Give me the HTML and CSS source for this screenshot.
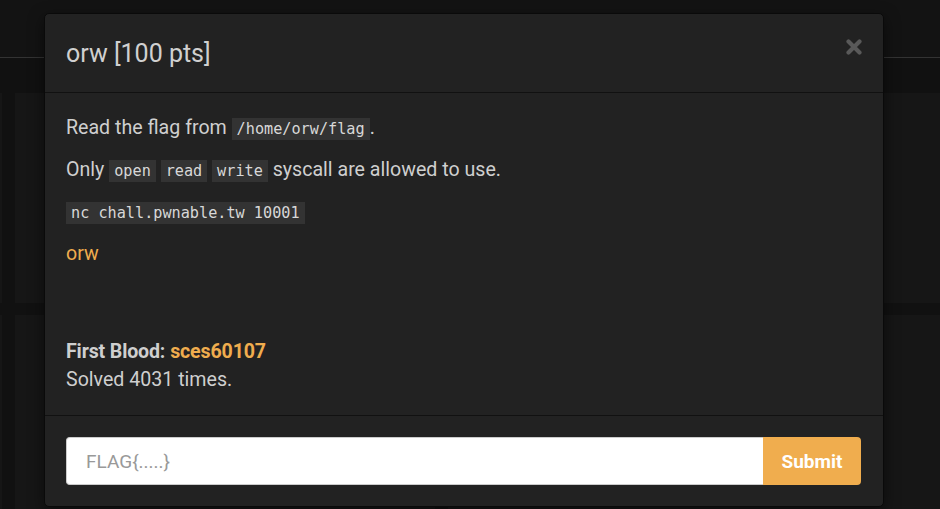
FILE: index.html
```html
<!DOCTYPE html>
<html>
<head>
<meta charset="utf-8">
<link rel="stylesheet" href="styles.css">
</head>
<body>
<div class="page">
  <div class="navbar"></div>
  <div class="cards">
    <div class="card-row">
      <div class="card c1"></div>
      <div class="card c2"></div>
      <div class="card c3"></div>
    </div>
    <div class="card-row">
      <div class="card c1"></div>
      <div class="card c2"></div>
      <div class="card c3"></div>
    </div>
  </div>
</div>
<div class="modal">
  <div class="modal-header">
    <h4 class="modal-title">orw [100 pts]</h4>
    <button class="close" aria-label="Close">
      <svg width="16" height="16" viewBox="0 0 16 16"><path d="M2.5 2.5 L13.5 13.5 M13.5 2.5 L2.5 13.5" stroke="#595959" stroke-width="4.2" stroke-linecap="round"/></svg>
    </button>
  </div>
  <div class="modal-body">
    <p>Read the flag from <code>/home/orw/flag</code>.</p>
    <p>Only <code>open</code> <code>read</code> <code>write</code> syscall are allowed to use.</p>
    <p><code>nc chall.pwnable.tw 10001</code></p>
    <p class="link">orw</p>
    <div class="stats">
      <div><b>First Blood:</b> <b class="user">sces60107</b></div>
      <div>Solved 4031 times.</div>
    </div>
  </div>
  <div class="modal-footer">
    <div class="input-group">
      <input class="flag-input" type="text" placeholder="FLAG{.....}">
      <button class="submit">Submit</button>
    </div>
  </div>
</div>
</body>
</html>
```
FILE: styles.css
```css
* { box-sizing: border-box; }
html, body { margin: 0; padding: 0; }
body {
  width: 940px;
  height: 509px;
  overflow: hidden;
  background: #111111;
  font-family: Roboto, "Noto Sans", sans-serif;
  position: relative;
}
.page { width: 940px; height: 509px; }
.navbar {
  height: 58px;
  background: #131313;
  border-bottom: 1px solid #333333;
}
.cards {
  padding-top: 35px;
  display: flex;
  flex-direction: column;
  gap: 12px;
}
.card-row {
  display: flex;
  gap: 13px;
  height: 210px;
  margin-left: -20px;
}
.card { background: #161616; height: 100%; }
.c1 { width: 22px; }
.c2 { width: 420px; }
.c3 { flex: 1; }

.modal {
  position: absolute;
  left: 44px;
  top: 13px;
  width: 840px;
  height: 494px;
  background: #222222;
  border: 1px solid #0a0a0a;
  border-radius: 5px;
  box-shadow: 0 5px 15px rgba(0,0,0,.5);
  display: flex;
  flex-direction: column;
  color: #cfcfcf;
}
.modal-header {
  height: 79px;
  border-bottom: 1px solid #111111;
  display: flex;
  align-items: center;
  justify-content: space-between;
  padding: 0 21px 0 21px;
}
.modal-title {
  margin: 0;
  font-size: 25px;
  font-weight: 400;
  color: #d0d0d0;
}
.close {
  background: none;
  border: 0;
  padding: 0;
  width: 16px;
  height: 16px;
  margin-top: -12px;
  margin-right: 0;
}
.close svg { display: block; }
.modal-body {
  flex: 1;
  padding: 21px 21px 0 21px;
  font-size: 19.6px;
}
.modal-body p {
  margin: 0 0 13px 0;
  line-height: 28px;
}
code {
  font-family: "DejaVu Sans Mono", monospace;
  font-size: 15.2px;
  background: #333333;
  color: #d8d8d8;
  padding: 2px 5px;
  border-radius: 0;
}
.link { color: #f0ad4e; }
.stats {
  margin-top: 70px;
  line-height: 28px;
}
.stats b { font-weight: 700; letter-spacing: -0.15px; }
.user { color: #f0ad4e; }
.modal-footer {
  height: 91px;
  border-top: 1px solid #111111;
  padding: 21px 22px 0 21px;
}
.input-group {
  display: flex;
  height: 48px;
}
.flag-input {
  flex: 1;
  height: 48px;
  border: 1px solid #cccccc;
  border-right: 0;
  border-radius: 4px 0 0 4px;
  background: #ffffff;
  padding: 0 19px;
  font-family: Roboto, sans-serif;
  font-size: 19px;
  color: #555;
  outline: none;
}
.flag-input::placeholder { color: #999999; }
.submit {
  width: 98px;
  height: 48px;
  border: 0;
  background: #f0ad4e;
  color: #ffffff;
  font-family: Roboto, sans-serif;
  font-weight: 700;
  font-size: 19px;
  border-radius: 0 4px 4px 0;
  padding: 0;
}
```
